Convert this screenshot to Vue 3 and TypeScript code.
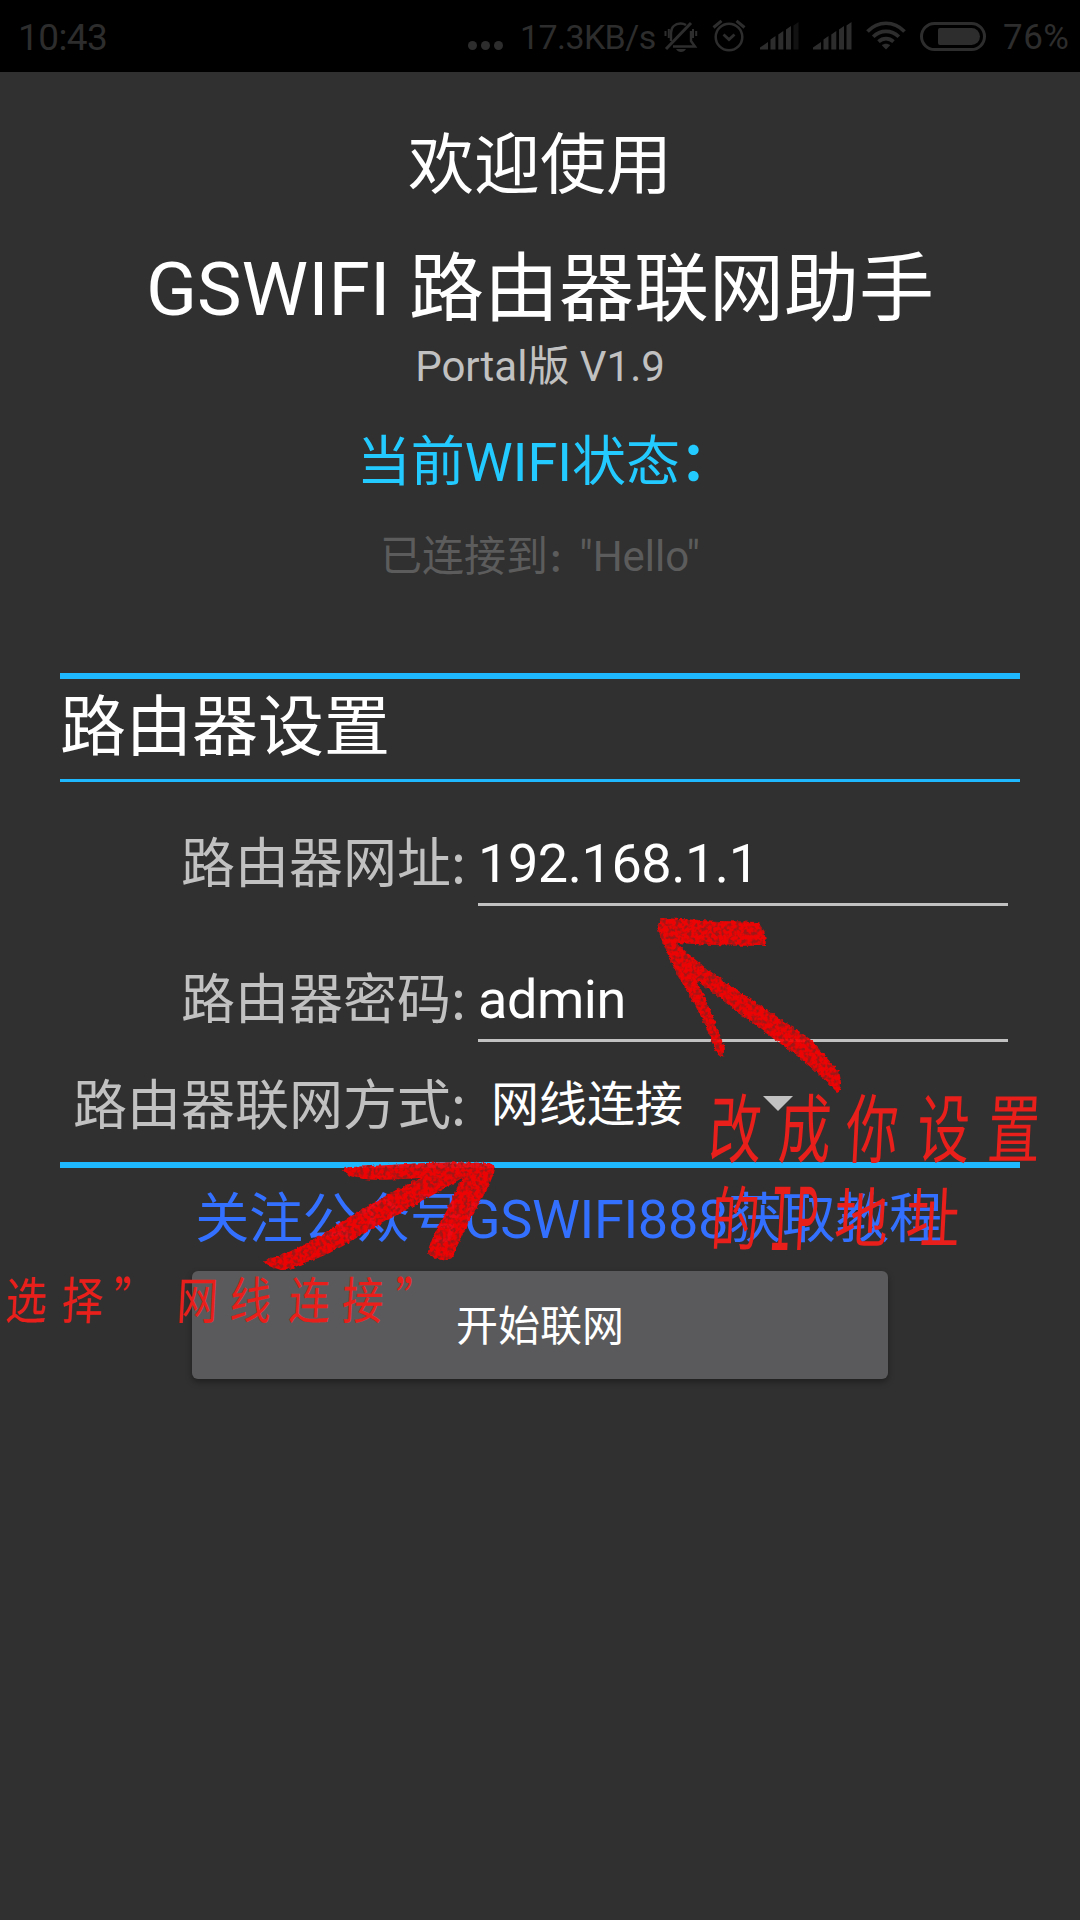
<script setup lang="ts">
import { ref } from 'vue'

interface Field {
  label: string
  value: string
}

const fields = ref<Field[]>([
  { label: '路由器网址:', value: '192.168.1.1' },
  { label: '路由器密码:', value: 'admin' },
])
const mode = ref('网线连接')
</script>

<template>
  <div class="screen">
    <header class="status">
      <span class="clock">10:43</span>
      <span class="dots"><i></i><i></i><i></i></span>
      <span class="speed">17.3KB/s</span>
      <svg class="bell" width="34" height="34" viewBox="0 0 34 34" fill="none" stroke="#2d2d2d" stroke-width="2.4">
        <path d="M27 3 2 29" stroke-width="3" />
        <path d="M7 21V13C7 7 11 3.5 16.5 3.5c2.200 0 4 .6 5.500 1.600M27 11v10l4 5.500H9" />
        <path d="M1.500 11v5M4.800 9v9M29 9v9M32.200 11v5" stroke-width="2" />
        <path d="M12 29h10c-1 2-3 3-5 3s-4-1-5-3z" fill="#2d2d2d" stroke="none" />
      </svg>
      <svg class="alarm" width="34" height="34" viewBox="0 0 34 34" fill="none" stroke="#2d2d2d" stroke-width="2.500">
        <circle cx="17" cy="18" r="13.300" />
        <path d="m11.500 15.500 5.500 5 5.500-5" stroke-width="2.800" />
        <path d="M1.500 8.500 9.500 1.800M32.500 8.500 24.500 1.800" stroke-width="3" />
      </svg>
      <svg class="signal" width="39" height="28" viewBox="0 0 39 28" fill="#2d2d2d">
        <path d="M0 27.500v-2L8 20v7.500zM10.500 27.500v-10l5-3.500v13.500zM18.300 27.500v-15l5-3.500v18.500zM26 27.500v-20l5-3.500v23.500z" />
        <path d="M33.500 27.500V3.500L38.500 0v27.500z" fill="#121212" />
      </svg>
      <svg class="signal" width="39" height="28" viewBox="0 0 39 28" fill="#2d2d2d">
        <path d="M0 27.500v-2L8 20v7.500zM10.500 27.500v-10l5-3.500v13.500zM18.300 27.500v-15l5-3.500v18.500zM26 27.500v-20l5-3.500v23.500zM33.500 27.500V3.500L38.500 0v27.500z" />
      </svg>
      <svg class="wifi" width="40" height="29" viewBox="0 0 40 29" fill="none" stroke="#2d2d2d" stroke-width="3.700">
        <path d="M1.500 10.500C12-.5 28-.5 38.500 10.500M7.200 15.700C14.500 8.500 25.500 8.500 32.800 15.700M12.500 20.700c4.500-4 10.500-4 15 0" />
        <path d="M20 28.500 15.800 24.300c2.500-2 5.900-2 8.400 0z" fill="#2d2d2d" stroke="none" />
      </svg>
      <span class="battery"><i></i></span>
      <span class="percent">76%</span>
    </header>

    <main class="page">
      <h1 class="welcome">欢迎使用</h1>
      <h2 class="title">GSWIFI 路由器联网助手</h2>
      <p class="version">Portal版 V1.9</p>
      <p class="wifi-title">当前WIFI状态<span class="colon">：</span></p>
      <p class="wifi-state">已连接到<span class="colon">：</span>"Hello"</p>

      <section class="settings">
        <h3 class="heading">路由器设置</h3>
        <div v-for="f in fields" :key="f.label" class="row">
          <span class="label">{{ f.label }}</span>
          <span class="field">{{ f.value }}</span>
        </div>
        <div class="row mode">
          <span class="label">路由器联网方式:</span>
          <span class="select">{{ mode }}</span>
          <svg class="caret" width="30" height="15" viewBox="0 0 30 15"><path d="M0 0h30L15 15z" fill="#c1c1c1" /></svg>
        </div>
      </section>

      <p class="follow">关注公众号GSWIFI888获取教程</p>
      <button class="start" type="button">开始联网</button>
    </main>

    <svg class="notes" width="1080" height="1920" viewBox="0 0 1080 1920">
      <defs>
        <filter id="crayon" x="-5%" y="-5%" width="110%" height="110%" color-interpolation-filters="sRGB">
          <feTurbulence type="fractalNoise" baseFrequency="0.25" numOctaves="2" seed="4" result="noise" />
          <feDisplacementMap in="SourceGraphic" in2="noise" scale="4" xChannelSelector="R" yChannelSelector="G" result="shape" />
          <feColorMatrix in="noise" type="matrix" values="0 0 0 0 0.6  0 0 0 0 0.1  0 0 0 0 0.1  4 0 0 0 -1.800" result="grain" />
          <feComposite in="grain" in2="shape" operator="in" result="speckle" />
          <feMerge>
            <feMergeNode in="shape" />
            <feMergeNode in="speckle" />
          </feMerge>
        </filter>
      </defs>
      <g fill="#fc0000" fill-opacity=".93" filter="url(#crayon)">
        <path d="M661 918Q710 921 757 922Q766 926 766 946Q720 946 677 943Q700 966 740 992L809 1038Q827 1058 839 1072Q844 1090 837 1092Q825 1080 806 1063Q790 1050 774 1039L697 981Q710 1008 725 1048Q724 1057 721 1057Q716 1055 712 1042Q702 1015 685 988Q667 957 657 927Z" />
        <path d="M343 1170Q344 1167 352 1167L406 1164Q450 1161 489 1163Q497 1165 494 1173Q487 1191 478 1205Q464 1230 452 1258Q445 1262 438 1259Q428 1256 428 1252Q432 1235 451 1202L462 1178Q430 1197 409 1208L358 1237Q330 1255 304 1263Q288 1271 280 1270Q266 1266 264 1262Q266 1258 279 1256Q306 1246 344 1220L396 1190L420 1178Q375 1181 364 1179Q348 1178 343 1170Z" />
      </g>
      <g class="hand">
        <text class="big" transform="translate(0 1157) skewX(-3) scale(.82 1.18)" x="863 948 1030 1117 1203" y="0">改成你设置</text>
        <text class="big" transform="translate(0 1245) skewX(-3) scale(.76 1.1)" x="934" y="0">的</text>
        <text class="latin" transform="translate(768 1250) skewX(-3) scale(.62 1.55)" x="0 42" y="0">IP</text>
        <text class="big" transform="translate(0 1242) skewX(-3) scale(.84 1.02)" x="992 1077" y="0">地址</text>
        <text class="small" transform="translate(0 1319) skewX(-3) scale(.92 1.12)" x="5 66 122 150 191 249 313 371 428" y="0">选择” 网线连接”</text>
      </g>
    </svg>
  </div>
</template>

<style>
body {
  margin: 0;
  background: #303030;
}
</style>

<style scoped>
.screen {
  position: relative;
  width: 1080px;
  height: 1920px;
  overflow: hidden;
  background: #303030;
  color: #fff;
  font-family: Roboto, 'Noto Sans CJK SC', sans-serif;
}
h1, h2, h3, p {
  margin: 0;
  font-weight: 400;
  white-space: nowrap;
}
.status {
  display: flex;
  align-items: flex-start;
  height: 72px;
  background: #000;
  color: #2d2d2d;
  line-height: 72px;
  white-space: nowrap;
}
.clock {
  width: 450px;
  padding-left: 18px;
  font-size: 37px;
  letter-spacing: -.6px;
  line-height: 76px;
}
.dots {
  display: flex;
  gap: 4px;
  width: 52px;
  padding-top: 41px;
}
.dots i {
  width: 9px;
  height: 9px;
  border-radius: 50%;
  background: #2d2d2d;
}
.speed {
  width: 144px;
  font-size: 34px;
  letter-spacing: -.6px;
  line-height: 75px;
}
.bell { margin-top: 20px; }
.alarm { margin: 19px 0 0 14px; }
.signal { margin: 22px 0 0 14px; }
.wifi { margin: 21px 0 0 14px; }
.battery {
  box-sizing: border-box;
  width: 66px;
  height: 29px;
  margin: 22px 0 0 14px;
  padding: 3px 3px 3px 15px;
  border: 3px solid #2d2d2d;
  border-radius: 15px;
}
.battery i {
  display: block;
  height: 17px;
  border-radius: 2px 9px 9px 2px;
  background: #2d2d2d;
}
.percent {
  margin-left: 17px;
  font-size: 35px;
  letter-spacing: .5px;
  line-height: 75px;
}
.page {
  display: flex;
  flex-direction: column;
  align-items: center;
  padding-top: 49px;
}
.welcome { font-size: 66px; line-height: 89px; }
.title { margin-top: 29px; font-size: 75px; line-height: 100px; }
.version { color: #c1c1c1; font-size: 42px; line-height: 56px; }
.wifi-title { margin-top: 32px; color: #22caff; font-size: 54px; line-height: 72px; }
.wifi-title .colon { margin-right: -.2em; font-weight: 700; }
.wifi-state { margin-top: 30px; color: #5c5c5c; font-size: 42px; line-height: 56px; }
.wifi-state .colon { font-size: .74em; font-weight: 700; line-height: 1; }
.settings {
  width: 960px;
  margin-top: 88px;
  border-top: 6px solid #1eb8ff;
  border-bottom: 6px solid #1eb8ff;
  padding-bottom: 17px;
}
.heading {
  padding: 0 0 3px;
  border-bottom: 3px solid #1eb8ff;
  font-size: 66px;
  line-height: 97px;
}
.row {
  display: flex;
  align-items: flex-start;
  height: 82px;
  margin-top: 54px;
  font-size: 54px;
  line-height: 79px;
  white-space: nowrap;
}
.heading + .row { margin-top: 42px; }
.row.mode {
  box-sizing: border-box;
  margin-top: 21px;
  padding-top: 3px;
}
.label {
  width: 406px;
  flex: none;
  color: #c1c1c1;
  font-family: 'Noto Sans CJK SC', sans-serif;
  line-height: 72px;
  text-align: right;
}
.field {
  width: 530px;
  margin-left: 12px;
  border-bottom: 3px solid #c1c1c1;
  letter-spacing: -.45px;
}
.select {
  width: 272px;
  margin-left: 25px;
  font-size: 48px;
  line-height: 77px;
}
.caret { margin-top: 30px; }
.follow {
  margin: 16px 0 0 58px;
  color: #3470ff;
  font-size: 54px;
  letter-spacing: -.3px;
  line-height: 72px;
}
.start {
  width: 696px;
  height: 108px;
  margin: 15px 0 0;
  padding: 3px 0 0;
  border: 0;
  border-radius: 6px;
  background: #5a5a5c;
  box-shadow: 0 3px 6px rgba(0, 0, 0, .35);
  color: #fff;
  font: 42px/105px Roboto, 'Noto Sans CJK SC', sans-serif;
}
.notes {
  position: absolute;
  top: 0;
  left: 0;
  pointer-events: none;
}
.hand {
  fill: #e81f1a;
  font-family: 'Noto Sans CJK SC', sans-serif;
}
.big { font-size: 64px; }
.small { font-size: 45px; }
.latin { font-family: 'Liberation Mono', monospace; font-size: 62px; }
</style>
